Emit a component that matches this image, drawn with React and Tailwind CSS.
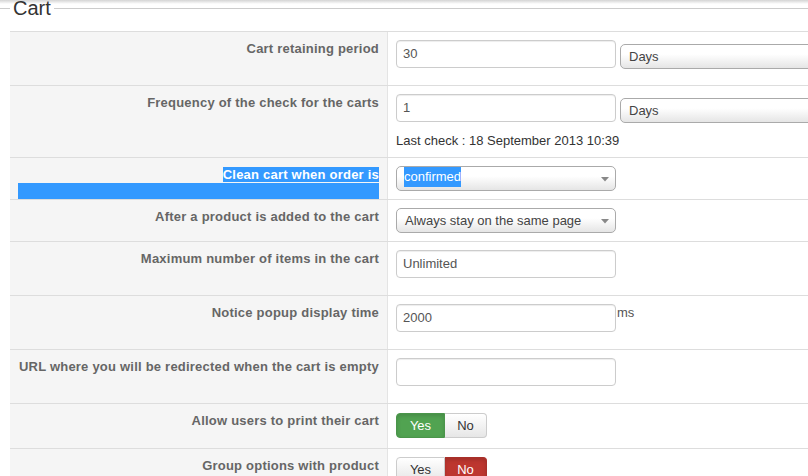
import React from 'react'

function Row({ label, h, pt = 'pt-2', children }) {
  return (
    <div className={`flex border-t border-[#dddddd] ${h}`}>
      <div className="w-[378px] shrink-0 bg-[#f5f5f5] border-r border-[#e4e4e4] px-2 pt-[9px] text-right text-[13px] leading-[16px] tracking-[0.22px] font-bold text-[#666666]">
        {label}
      </div>
      <div className={`flex-1 pl-2 ${pt}`}>{children}</div>
    </div>
  )
}

function TextInput({ value }) {
  return (
    <div className="h-[28px] w-[220px] shrink-0 flex items-center border border-[#cccccc] rounded-[4px] px-[6px] text-[13px] text-[#555555] bg-white shadow-[inset_0_1px_1px_rgba(0,0,0,0.075)]">
      {value}
    </div>
  )
}

function Caret() {
  return (
    <svg width="8" height="5" viewBox="0 0 8 5" className="absolute right-[6px] top-[10px]">
      <path d="M0 0 H8 L4 4.5 Z" fill="#888888" />
    </svg>
  )
}

function Select({ children, wide, caret }) {
  return (
    <div
      className={`relative h-[25px] shrink-0 flex items-center border border-[#aaaaaa] rounded-[5px] pl-2 text-[13px] text-[#444444] bg-[linear-gradient(#ffffff,#ffffff_40%,#e5e5e5)] ${
        wide ? 'w-[260px]' : 'w-[220px]'
      }`}
    >
      {children}
      {caret && <Caret />}
    </div>
  )
}

function Toggle({ yes }) {
  return (
    <div className="flex h-[25px] text-[13px]">
      <div
        className={`w-[49px] flex items-center justify-center rounded-l-[4px] border ${
          yes
            ? 'bg-[#51a351] border-[#4a954a] text-white shadow-[inset_0_2px_4px_rgba(0,0,0,0.15)]'
            : 'bg-[linear-gradient(#ffffff,#e6e6e6)] border-[#cccccc] text-[#333333]'
        }`}
      >
        Yes
      </div>
      <div
        className={`w-[42px] flex items-center justify-center rounded-r-[4px] border border-l-0 ${
          yes
            ? 'bg-[linear-gradient(#ffffff,#e6e6e6)] border-[#cccccc] text-[#333333]'
            : 'bg-[#bd362f] border-[#a8302a] text-white shadow-[inset_0_2px_4px_rgba(0,0,0,0.15)]'
        }`}
      >
        No
      </div>
    </div>
  )
}

export default function App() {
  return (
    <div className="w-[808px] h-[476px] overflow-hidden bg-[linear-gradient(#d4d4d4,#ffffff_4px)] font-['Liberation_Sans',Arial,sans-serif]">
      {/* legend */}
      <div className="flex items-center h-[20px] mt-[-2px]">
        <div className="w-[10px] h-px bg-[#cccccc]" />
        <span className="px-[3px] text-[20px] leading-[20px] text-[#333333]">Cart</span>
        <div className="flex-1 h-px bg-[#cccccc]" />
      </div>

      <div className="ml-[10px] mt-[13px]">
        <Row label="Cart retaining period" h="h-[54px]">
          <div className="flex items-start">
            <TextInput value="30" />
            <div className="ml-[4px] mt-[4px]">
              <Select wide>Days</Select>
            </div>
          </div>
        </Row>

        <Row label="Frequency of the check for the carts" h="h-[72px]">
          <div className="flex items-start">
            <TextInput value="1" />
            <div className="ml-[4px] mt-[4px]">
              <Select wide>Days</Select>
            </div>
          </div>
          <div className="mt-[10px] text-[13px] leading-[15px] text-[#333333]">
            Last check : 18 September 2013 10:39
          </div>
        </Row>

        <Row
          label={
            <>
              <span className="bg-[#3399ff] text-white">Clean cart when order is</span>
              <div className="h-[16px] bg-[#3399ff]" />
            </>
          }
          h="h-[42px]"
        >
          <Select caret>
            <span className="self-start -ml-px inline-block h-[20px] leading-[20px] bg-[#3399ff] text-white">
              confirmed
            </span>
          </Select>
        </Row>

        <Row label="After a product is added to the cart" h="h-[42px]">
          <Select caret>Always stay on the same page</Select>
        </Row>

        <Row label="Maximum number of items in the cart" h="h-[54px]">
          <TextInput value="Unlimited" />
        </Row>

        <Row label="Notice popup display time" h="h-[54px]">
          <div className="flex items-start">
            <TextInput value="2000" />
            <span className="ml-px mt-[1px] text-[13px] leading-[15px] text-[#555555]">ms</span>
          </div>
        </Row>

        <Row label="URL where you will be redirected when the cart is empty" h="h-[54px]">
          <TextInput value="" />
        </Row>

        <Row label="Allow users to print their cart" h="h-[45px]" pt="pt-[9px]">
          <Toggle yes />
        </Row>

        <Row label="Group options with product" h="h-[60px]">
          <Toggle yes={false} />
        </Row>
      </div>
    </div>
  )
}
